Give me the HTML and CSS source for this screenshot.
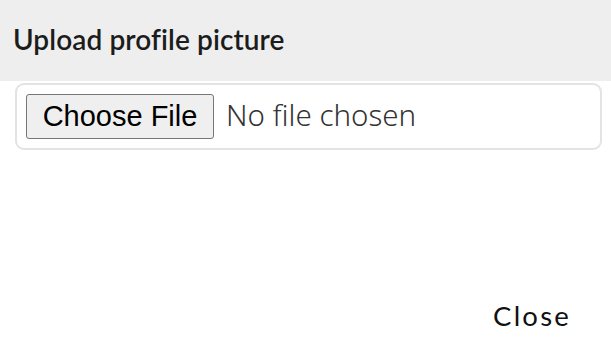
FILE: index.html
```html
<!DOCTYPE html>
<html lang="en">
<head>
    <meta charset="UTF-8">
    <meta name="viewport" content="width=device-width, initial-scale=1.0">
    <title>Upload profile picture</title>
    <link rel="stylesheet" href="styles.css">
</head>
<body>
    <div class="modal">
        <div class="modal-header">
            <h2>Upload profile picture</h2>
        </div>
        <div class="modal-body">
            <div class="file-box">
                <input type="file" id="picture" name="picture" class="file-input">
            </div>
        </div>
        <div class="modal-footer">
            <button type="button" class="close-btn">Close</button>
        </div>
    </div>
</body>
</html>
```

FILE: styles.css
```css
* {
    margin: 0;
    padding: 0;
    box-sizing: border-box;
}

body {
    background: #ffffff;
    font-family: 'Lato', sans-serif;
    color: #1a1a1a;
}

.modal {
    width: 611px;
    height: 349px;
    display: flex;
    flex-direction: column;
}

.modal-header {
    background: #eeeeee;
    height: 81px;
    display: flex;
    align-items: center;
    padding: 0 13px 3px;
}

.modal-header h2 {
    font-size: 28px;
    font-weight: 600;
    color: #1c1c1c;
    letter-spacing: 0.1px;
}

.modal-body {
    padding: 2px 9px 0 15px;
}

.file-box {
    border: 2px solid #e3e3e3;
    border-radius: 9px;
    height: 67px;
    padding: 9px 9px;
    display: flex;
    align-items: center;
}

.file-input {
    font-family: 'Noto Sans', sans-serif;
    font-size: 29.5px;
    font-weight: 300;
    color: #333;
}

.file-input::file-selector-button {
    font-family: 'Liberation Sans', Arial, sans-serif;
    font-size: 29px;
    font-weight: 400;
    color: #000;
    background: #efefef;
    border: 1px solid #767676;
    border-radius: 3px;
    width: 188px;
    height: 45px;
    padding: 0;
    margin-right: 12px;
}

.modal-footer {
    margin-top: auto;
    display: flex;
    justify-content: flex-end;
    padding: 0 40px 14px 0;
}

.close-btn {
    font-family: 'Lato', sans-serif;
    font-size: 27.5px;
    font-weight: 400;
    letter-spacing: 2.2px;
    background: none;
    border: none;
    color: #111;
    height: 40px;
}
```
